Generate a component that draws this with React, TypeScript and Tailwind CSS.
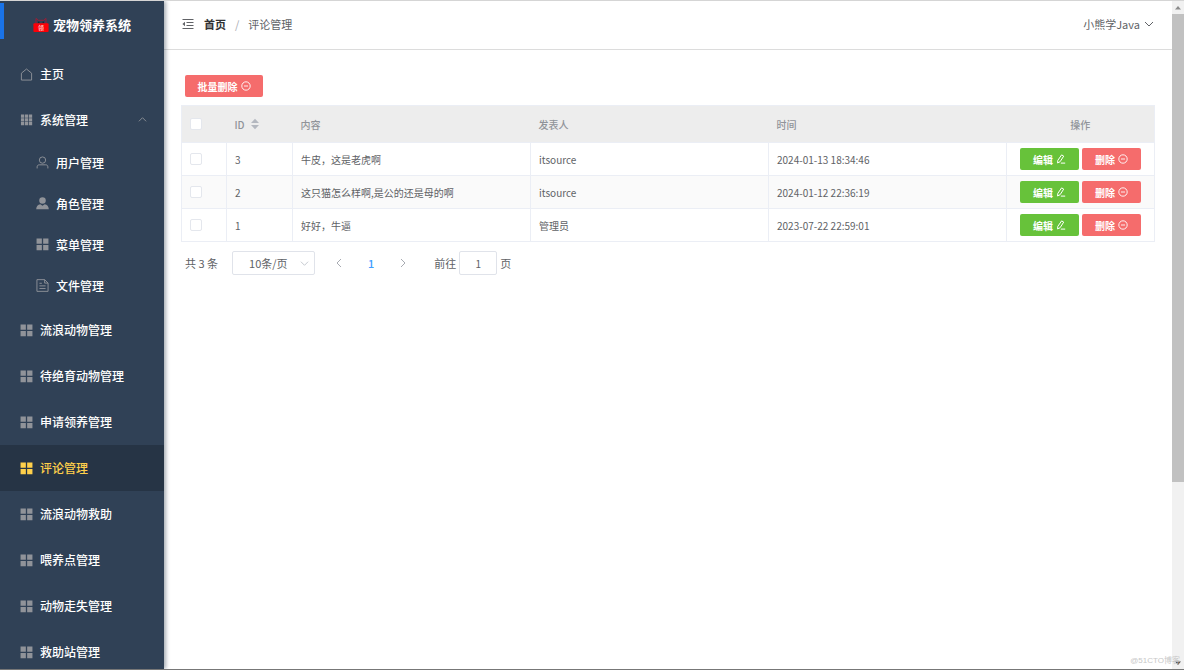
import { ReactNode } from "react";
import clsx from "clsx";

type IconProps = { className?: string };

function HouseIcon({ className }: IconProps) {
  return (
    <svg viewBox="0 0 14 14" fill="none" stroke="currentColor" className={className}>
      <path d="M1.5 5.6 7 1.1l5.5 4.5v7.4h-11z" />
    </svg>
  );
}

function NineGridIcon({ className }: IconProps) {
  return (
    <svg viewBox="0 0 14 14" fill="currentColor" className={className}>
      <path d="M1 1.5h3.5V5H1zM5.3 1.5h3.5V5H5.3zM9.6 1.5h3.5V5H9.6zM1 5.7h3.5v3.4H1zM5.3 5.7h3.5v3.4H5.3zM9.6 5.7h3.5v3.4H9.6zM1 9.8h3.5v3.4H1zM5.3 9.8h3.5v3.4H5.3zM9.6 9.8h3.5v3.4H9.6z" />
    </svg>
  );
}

function MenuIcon({ className }: IconProps) {
  return (
    <svg viewBox="0 0 14 14" fill="currentColor" className={className}>
      <path d="M.6.6h5.7v5.5H.6zM7.7.6h5.7v5.5H7.7zM.6 7.6h5.7v5.5H.6zM7.7 7.6h5.7v5.5H7.7z" />
    </svg>
  );
}

function UserIcon({ className }: IconProps) {
  return (
    <svg viewBox="0 0 14 14" fill="none" stroke="currentColor" className={className}>
      <circle cx="7" cy="4.4" r="3.4" />
      <path d="M1.2 13.4v-1.6c0-1.4.9-2.3 2.3-2.3h7c1.4 0 2.3.9 2.3 2.3v1.6" />
    </svg>
  );
}

function UserSolidIcon({ className }: IconProps) {
  return (
    <svg viewBox="0 0 14 14" fill="currentColor" className={className}>
      <circle cx="7" cy="3.8" r="3.5" />
      <path d="M4.6 7.8 7 9.4l2.4-1.6c2.6.4 4.2 1.8 4.4 5.5H.2c.2-3.7 1.8-5.1 4.4-5.5z" />
    </svg>
  );
}

function DocumentIcon({ className }: IconProps) {
  return (
    <svg viewBox="0 0 14 14" fill="none" stroke="currentColor" className={className}>
      <path d="M1 .7h8.3L13 4.4v8.9H1zM9.3.7v3.7H13M3.7 4.6h2.6M3.7 7.4h6.6M3.7 10.2h6.6" />
    </svg>
  );
}

function FoldIcon({ className }: IconProps) {
  return (
    <svg viewBox="0 0 12 12" fill="none" stroke="currentColor" className={className}>
      <path d="M.5 1.5h11M4.5 4.5h7M4.5 7.5h7M.5 10.5h11" />
      <path d="M3 3.8v4.4L.4 6z" fill="currentColor" stroke="none" />
    </svg>
  );
}

function ChevronIcon({ className }: IconProps) {
  return (
    <svg viewBox="0 0 10 10" fill="none" stroke="currentColor" className={className}>
      <path d="m1 3 4 4 4-4" />
    </svg>
  );
}

function RemoveIcon({ className }: IconProps) {
  return (
    <svg viewBox="0 0 10 10" fill="none" stroke="currentColor" strokeWidth="0.9" className={className}>
      <circle cx="5" cy="5" r="4.2" />
      <path d="M3 5h4" />
    </svg>
  );
}

function EditIcon({ className }: IconProps) {
  return (
    <svg viewBox="0 0 10 10" fill="none" stroke="currentColor" className={className}>
      <path d="M5.6.9 7.7 2.1 4.1 7.7 1.6 9l.2-2.6zM4.8 9.1h4.4" strokeLinejoin="round" />
    </svg>
  );
}

function SortIcon({ className }: IconProps) {
  return (
    <svg viewBox="0 0 8 12" fill="currentColor" className={className}>
      <path d="M4 .8l4 4.2H0zM4 11.2 0 7h8z" />
    </svg>
  );
}

function Logo() {
  return (
    <svg viewBox="0 0 16 16" className="size-4" aria-hidden="true">
      <path d="M3 7V1.4l2.3 1.9h5.4L13 1.4V7" fill="none" stroke="#b3152f" strokeWidth="0.8" />
      <circle cx="5.8" cy="5.2" r=".7" fill="#111827" />
      <circle cx="10.2" cy="5.2" r=".7" fill="#111827" />
      <rect x=".4" y="6.2" width="15.2" height="8.8" rx="1" fill="#fb0007" />
      <text x="8" y="13" fontSize="6" textAnchor="middle" fill="#ffd0d0">
        领
      </text>
    </svg>
  );
}

const systemItems = [
  { label: "用户管理", icon: UserIcon },
  { label: "角色管理", icon: UserSolidIcon },
  { label: "菜单管理", icon: MenuIcon },
  { label: "文件管理", icon: DocumentIcon },
];

const menuItems = [
  "流浪动物管理",
  "待绝育动物管理",
  "申请领养管理",
  "评论管理",
  "流浪动物救助",
  "喂养点管理",
  "动物走失管理",
  "救助站管理",
];

const comments = [
  { id: 3, content: "牛皮，这是老虎啊", author: "itsource", time: "2024-01-13 18:34:46" },
  { id: 2, content: "这只猫怎么样啊,是公的还是母的啊", author: "itsource", time: "2024-01-12 22:36:19" },
  { id: 1, content: "好好，牛逼", author: "管理员", time: "2023-07-22 22:59:01" },
];

function Sidebar() {
  return (
    <aside className="z-10 w-[164px] shrink-0 overflow-hidden bg-[#304156] text-xs font-medium text-white shadow-[2px_0_4px_rgba(0,21,41,0.35)]">
      <div className="relative flex h-[50px] items-center justify-center gap-1 pb-0.5">
        <span className="absolute left-0 top-0.5 h-9 w-1 bg-[#1a73e8]" />
        <Logo />
        <h1 className="text-[13px] font-bold">宠物领养系统</h1>
      </div>
      <nav>
        <a href="#" className="flex h-[46px] items-center gap-[7px] pl-5">
          <HouseIcon className="size-[13px] text-[#909399]" />
          主页
        </a>
        <button className="flex h-[45px] w-full items-center gap-[7px] pl-5 pr-[17px]">
          <NineGridIcon className="size-[13px] text-[#909399]" />
          系统管理
          <ChevronIcon className="ml-auto size-[9px] rotate-180 text-[#909399]" />
        </button>
        <div className="pb-px">
          {systemItems.map(({ label, icon: Icon }) => (
            <a key={label} href="#" className="flex h-[41px] items-center gap-[7px] pl-9">
              <Icon className="size-[13px] text-[#909399]" />
              {label}
            </a>
          ))}
        </div>
        {menuItems.map((label) => (
          <a
            key={label}
            href="#"
            className={clsx(
              "flex h-[46px] items-center gap-[7px] pl-5",
              label === "评论管理" && "bg-[#263445] text-[#ffd04b]"
            )}
          >
            <MenuIcon
              className={clsx("size-[13px]", label === "评论管理" ? "text-[#ffd04b]" : "text-[#909399]")}
            />
            {label}
          </a>
        ))}
      </nav>
    </aside>
  );
}

function Header() {
  return (
    <header className="flex h-[49px] items-center border-b border-[#dcdcdc] px-[18px] pb-0.5 text-[11px]">
      <button aria-label="收起菜单" className="mr-[10px] text-[#606266]">
        <FoldIcon className="size-3" />
      </button>
      <nav className="flex items-center">
        <a href="#" className="font-bold text-[#303133]">
          首页
        </a>
        <span className="mx-[9px] text-[#a8abb2]">/</span>
        <span className="text-[#606266]">评论管理</span>
      </nav>
      <button className="ml-auto flex items-center gap-1 text-[#606266]">
        小熊学Java
        <ChevronIcon className="size-[10px]" />
      </button>
    </header>
  );
}

function ActionButton({ className, children }: { className: string; children: ReactNode }) {
  return (
    <button
      className={clsx(
        "inline-flex h-[22px] items-center justify-center gap-[3px] rounded-xs text-[10px] font-bold text-white",
        className
      )}
    >
      {children}
    </button>
  );
}

function Checkbox({ label }: { label: string }) {
  return (
    <input
      type="checkbox"
      aria-label={label}
      className="block size-3 appearance-none rounded-xs border border-[#e4e7ed] bg-white checked:bg-[#409eff]"
    />
  );
}

function CommentTable() {
  return (
    <table className="w-full table-fixed border-collapse border border-[#ebeef5] text-left text-[10px] text-[#606266]">
      <colgroup>
        <col className="w-[45px]" />
        <col className="w-[66px]" />
        <col />
        <col />
        <col />
        <col className="w-[148px]" />
      </colgroup>
      <thead className="bg-[#ededed] text-[#909399]">
        <tr className="h-[37px]">
          <th className="pl-2">
            <Checkbox label="全选" />
          </th>
          <th className="pl-2 font-medium">
            <button className="flex items-center gap-[6px]">
              ID
              <SortIcon className="h-3 w-2 text-[#b4b8c0]" />
            </button>
          </th>
          <th className="pl-2 font-medium">内容</th>
          <th className="pl-2 font-medium">发表人</th>
          <th className="pl-2 font-medium">时间</th>
          <th className="text-center font-medium">操作</th>
        </tr>
      </thead>
      <tbody>
        {comments.map((comment) => (
          <tr key={comment.id} className="h-[33px] even:bg-[#fafafa]">
            <td className="border border-[#ebeef5] pl-2">
              <Checkbox label={`选择 ${comment.id}`} />
            </td>
            <td className="border border-[#ebeef5] pl-2">{comment.id}</td>
            <td className="border border-[#ebeef5] pl-2">{comment.content}</td>
            <td className="border border-[#ebeef5] pl-2">{comment.author}</td>
            <td className="border border-[#ebeef5] pl-2">{comment.time}</td>
            <td className="border border-[#ebeef5]">
              <div className="flex justify-center gap-[3px]">
                <ActionButton className="w-[59px] bg-[#67c23a]">
                  编辑
                  <EditIcon className="size-[10px]" />
                </ActionButton>
                <ActionButton className="w-[59px] bg-[#f56c6c]">
                  删除
                  <RemoveIcon className="size-[10px]" />
                </ActionButton>
              </div>
            </td>
          </tr>
        ))}
      </tbody>
    </table>
  );
}

function Pagination() {
  return (
    <div className="mt-[9px] flex items-center pl-1 text-[11px] text-[#606266]">
      <span>共 3 条</span>
      <div className="relative ml-[14px]">
        <select
          aria-label="每页条数"
          className="block h-6 w-[83px] appearance-none rounded-xs border border-[#e0e3ea] bg-white pl-4"
        >
          <option>10条/页</option>
          <option>20条/页</option>
          <option>50条/页</option>
        </select>
        <ChevronIcon className="pointer-events-none absolute right-[6px] top-2 size-[9px] text-[#c0c4cc]" />
      </div>
      <button aria-label="上一页" className="ml-[19px] text-[#a8abb2]">
        <ChevronIcon className="size-[10px] rotate-90" />
      </button>
      <button className="mx-6 font-medium text-[#409eff]">1</button>
      <button aria-label="下一页" className="text-[#a8abb2]">
        <ChevronIcon className="size-[10px] -rotate-90" />
      </button>
      <label className="ml-[26px] flex items-center gap-[3px]">
        前往
        <input
          type="text"
          defaultValue="1"
          aria-label="页码"
          className="h-6 w-[38px] rounded-xs border border-[#e0e3ea] text-center text-[10px]"
        />
        页
      </label>
    </div>
  );
}

function ScrollTrack() {
  return (
    <div className="flex w-3 shrink-0 flex-col items-center bg-[#f1f1f1]">
      <svg viewBox="0 0 12 13" className="h-[13px] w-3 shrink-0" fill="#8b8b8b">
        <path d="m6 5 3 3.5H3z" />
      </svg>
      <div className="h-[70%] w-full bg-[#c1c1c1]" />
      <svg viewBox="0 0 12 13" className="mt-auto h-[13px] w-3 shrink-0" fill="#505050">
        <path d="m6 9 3-3.5H3z" />
      </svg>
    </div>
  );
}

export default function App() {
  return (
    <div className="relative flex h-screen overflow-hidden border-b border-t border-b-[#777] border-t-[#d5d5d5] bg-white font-['Noto_Sans_CJK_SC',sans-serif]">
      <Sidebar />
      <div className="min-w-0 flex-1">
        <Header />
        <main className="px-[17px] pt-[25px]">
          <div className="mb-2 flex pl-1">
            <ActionButton className="w-[78px] bg-[#f56c6c]">
              批量删除
              <RemoveIcon className="size-[10px]" />
            </ActionButton>
          </div>
          <CommentTable />
          <Pagination />
        </main>
      </div>
      <ScrollTrack />
      <span className="absolute bottom-0.5 right-1 font-['Liberation_Sans','Noto_Sans_CJK_SC',sans-serif] text-[8px] text-[#c8c8c8]">
        @51CTO博客
      </span>
    </div>
  );
}
